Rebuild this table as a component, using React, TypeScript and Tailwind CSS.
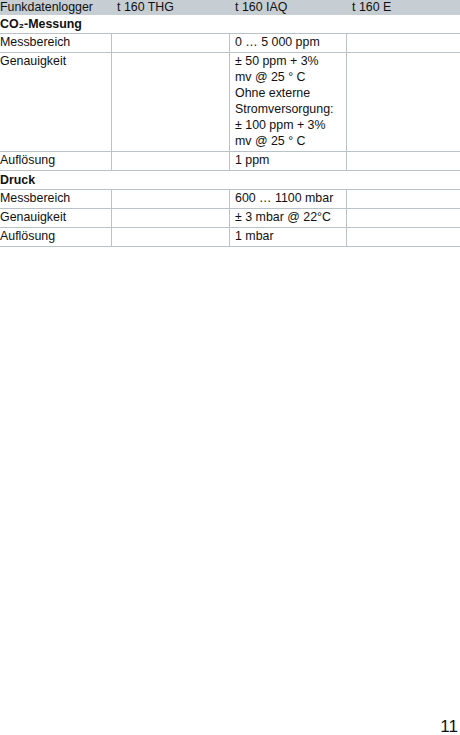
const border = "border-[#b9c2c8]";

type Row = { label: string; thg?: string; iaq: React.ReactNode; e?: string };

const co2Rows: Row[] = [
  { label: "Messbereich", iaq: "0 … 5\u00a0000 ppm" },
  {
    label: "Genauigkeit",
    iaq: (
      <>
        ± 50 ppm + 3%
        <br />
        mv @ 25 ° C
        <br />
        Ohne externe
        <br />
        Stromversorgung:
        <br />
        ± 100 ppm + 3%
        <br />
        mv @ 25 ° C
      </>
    ),
  },
  { label: "Auflösung", iaq: "1 ppm" },
];

const druckRows: Row[] = [
  { label: "Messbereich", iaq: "600 … 1100 mbar" },
  { label: "Genauigkeit", iaq: "± 3 mbar @ 22°C" },
  { label: "Auflösung", iaq: "1 mbar" },
];

const grid = "grid grid-cols-[111px_118px_117px_114px]";

function DataRow({ row, last }: { row: Row; last: boolean }) {
  const cell = `pl-[5px] pb-[2px] leading-4 border-l ${border}`;
  return (
    <div className={`${grid} border-t ${border} ${last ? "border-b" : ""}`}>
      <div className="pb-[2px] leading-4">{row.label}</div>
      <div className={cell}>{row.thg}</div>
      <div className={cell}>{row.iaq}</div>
      <div className={cell}>{row.e}</div>
    </div>
  );
}

function Section({ title, rows }: { title: React.ReactNode; rows: Row[] }) {
  return (
    <div>
      <div className="h-[18px] pt-px leading-4 font-bold">{title}</div>
      {rows.map((r, i) => (
        <DataRow key={i} row={r} last={i === rows.length - 1} />
      ))}
    </div>
  );
}

export default function App() {
  return (
    <div
      className="h-[735px] overflow-hidden bg-white text-[12.4px] text-[#111] flex flex-col"
      style={{ fontFamily: '"Liberation Sans", Arial, sans-serif' }}
    >
      <div className={`${grid} h-[15px] bg-[#c6ced3] leading-[14px]`}>
        <div>Funkdatenlogger</div>
        <div className="pl-[6px]">t 160 THG</div>
        <div className="pl-[6px]">t 160 IAQ</div>
        <div className="pl-[6px]">t 160 E</div>
      </div>
      <Section title={<>CO₂-Messung</>} rows={co2Rows} />
      <Section title="Druck" rows={druckRows} />
      <div className="mt-auto self-end pr-[2px] text-[17px] leading-[17px]">11</div>
    </div>
  );
}
